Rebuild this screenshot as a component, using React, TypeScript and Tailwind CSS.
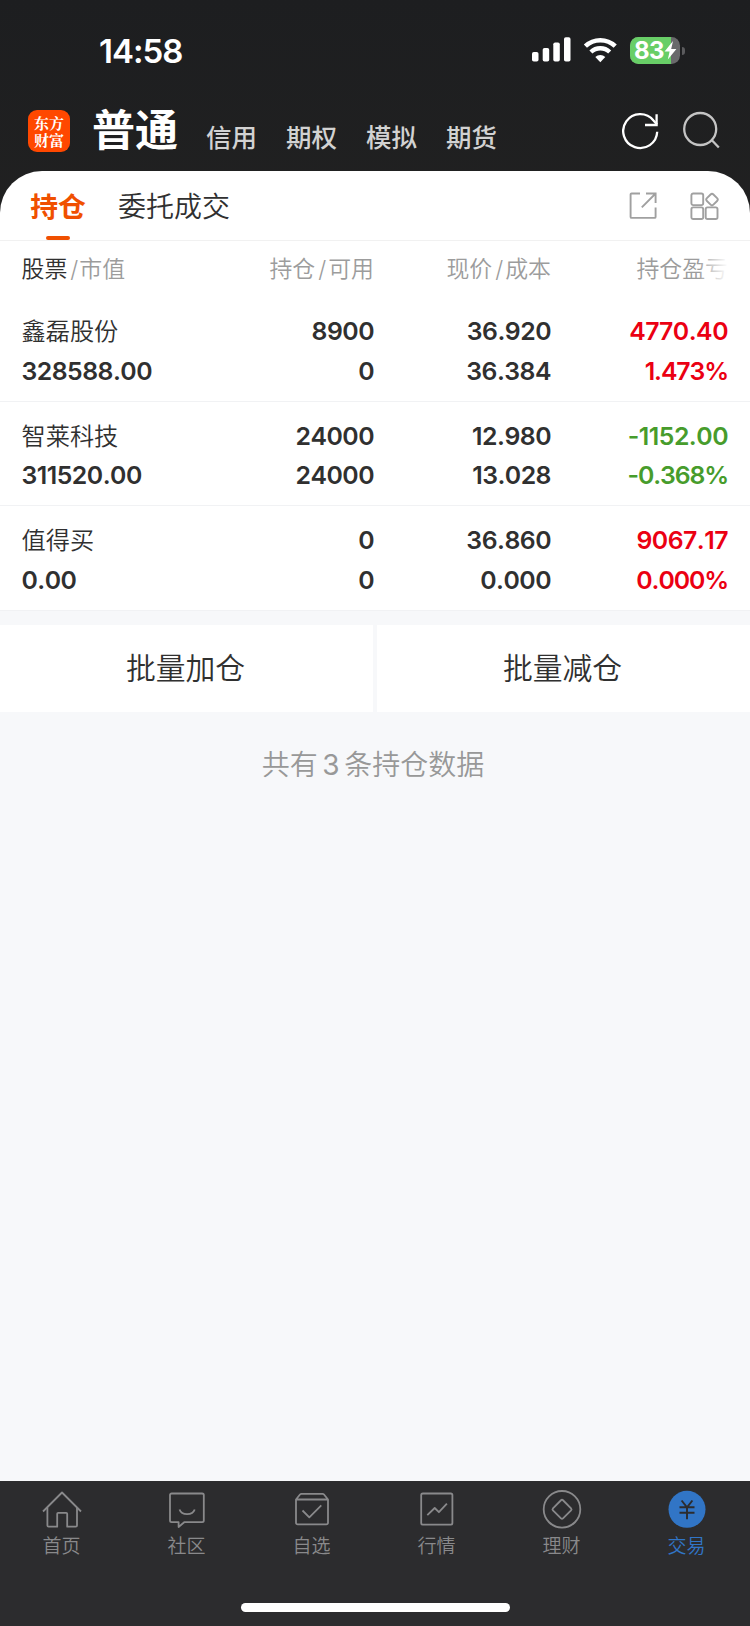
import React from "react";

const holdings = [
    { name: "鑫磊股份", value: "328588.00", amount: "8900", usable: "0", price: "36.920", cost: "36.384", profit: "4770.40", rate: "1.473%", color: "text-[#eb0012]" },
    { name: "智莱科技", value: "311520.00", amount: "24000", usable: "24000", price: "12.980", cost: "13.028", profit: "-1152.00", rate: "-0.368%", color: "text-[#479c2c]" },
    { name: "值得买", value: "0.00", amount: "0", usable: "0", price: "36.860", cost: "0.000", profit: "9067.17", rate: "0.000%", color: "text-[#eb0012]" },
];

const StatusBar = () => (
    <div className="flex h-[100px] items-start pl-[99px] pr-[65px] pt-[32px] text-white">
        <div className="text-[33px] leading-[38px] font-semibold tracking-[-1px]">14:58</div>
        <div className="ml-auto flex pt-[5px]">
            <svg width="39" height="26" viewBox="0 0 39 26" fill="currentColor">
                <rect x="0" y="15" width="6.5" height="9.5" rx="1.8" />
                <rect x="10.7" y="11" width="6.5" height="13.5" rx="1.8" />
                <rect x="21.3" y="5.5" width="6.5" height="19" rx="1.8" />
                <rect x="32" y="0.3" width="6.5" height="24.2" rx="1.8" />
            </svg>
            <svg className="ml-[12px]" width="35" height="26" viewBox="0 0 35 26" fill="none" stroke="currentColor">
                <path d="M2.4 9.2a21.6 21.6 0 0 1 29.8 0" strokeWidth="4.6" />
                <path d="M7.9 15a13.7 13.7 0 0 1 18.8 0" strokeWidth="4.4" />
                <path d="M17.3 25.2l-5-5.1a7.2 7.2 0 0 1 10 0z" fill="currentColor" stroke="none" />
            </svg>
            <div className="relative ml-[12px] flex h-[27px] w-[50px] overflow-hidden rounded-[8.5px] bg-[#69696b]">
                <div className="h-full w-[41px] bg-[#68ce67]"></div>
                <div className="absolute left-[4px] top-0 text-[24px] leading-[27px] font-bold tracking-[-0.5px]">83</div>
                <svg className="absolute left-[34px] top-[4px]" width="13" height="19" viewBox="0 0 13 19" fill="currentColor">
                    <path d="M9 0L0.6 10.4h5L3.8 18.6 12.4 8H7.2z" />
                </svg>
            </div>
            <div className="ml-[2px] mt-[10px] h-[8px] w-[3px] rounded-r-[3px] bg-[#5b5b5d]"></div>
        </div>
    </div>
);

const Header = () => (
    <div className="flex h-[71px] pl-[28px] pr-[29px]">
        <div className="mt-[10px] flex h-[42px] w-[42px] flex-col items-center justify-center rounded-[9px] bg-[#ff4800] text-center font-['Noto_Serif_CJK_SC','Noto_Sans_CJK_SC',serif] text-[15px] leading-[17px] font-bold text-white">
            东方<br />财富
        </div>
        <div className="ml-[22px] w-[88px] text-[43px] leading-[60px] font-bold text-white">普通</div>
        <div className="ml-[26px] mt-[18px] flex gap-[29px] text-[25.5px] leading-[40px] font-medium text-[#d2d2d2]">
            <span>信用</span>
            <span>期权</span>
            <span>模拟</span>
            <span>期货</span>
        </div>
        <svg className="ml-auto mt-[11px]" width="38" height="40" viewBox="0 0 38 40" fill="none" stroke="#fff" strokeWidth="2.3">
            <path d="M35.2 20.8A17 17 0 1 1 31.5 9.5L35 13.5" />
            <path d="M34.6 3.300v10.700H23" />
        </svg>
        <svg className="ml-[23px] mt-[11px]" width="38" height="40" viewBox="0 0 38 40" fill="none" stroke="#c4c4c4" strokeWidth="2.3">
            <circle cx="17.2" cy="18" r="16" />
            <path d="M28.2 28.5l7.600 8" />
        </svg>
    </div>
);

const Tabs = () => (
    <div className="flex h-[70px] border-b border-[#f1f1f1] pl-[30px] pr-[31px]">
        <div className="flex w-[56px] flex-col items-center whitespace-nowrap">
            <div className="mt-[15px] text-[27.8px] leading-[42px] font-semibold text-[#f05000]">持仓</div>
            <div className="mt-[8px] h-[5px] w-[24px] rounded-[2px] bg-[#f05000]"></div>
        </div>
        <div className="ml-[32px] mt-[15px] text-[28px] leading-[42px] font-[350] text-[#303030]">委托成交</div>
        <svg className="ml-auto mt-[21px]" width="28" height="28" viewBox="0 0 28 28" fill="none" stroke="#a0a0a0" strokeWidth="1.9">
            <path d="M11 1.5H2.600a1 1 0 0 0-1 1v22.400a1 1 0 0 0 1 1h23a1 1 0 0 0 1-1V15.600" />
            <path d="M17 1.5h9.600v9.400M26.600 1.500L12.800 15.400" />
        </svg>
        <svg className="ml-[33px] mt-[21px]" width="29" height="29" viewBox="0 0 29 29" fill="none" stroke="#a0a0a0" strokeWidth="1.9">
            <rect x="1.4" y="1.5" width="11.8" height="11.6" rx="1.8" />
            <rect x="1.4" y="15.4" width="11.8" height="11.6" rx="1.8" />
            <rect x="15.7" y="15.4" width="11.8" height="11.6" rx="1.8" />
            <rect x="17.4" y="3" width="9.2" height="9.2" rx="2" transform="rotate(45 22 7.6)" />
        </svg>
    </div>
);

const TableHead = () => (
    <div className="grid h-[56px] grid-cols-[172.5px_180px_177px_177px] pl-[21.5px] pt-[10px] text-[22.9px] leading-[36px] font-[350] text-[#9c9c9c]">
        <div>
            <span className="text-[#303030]">股票</span>
            <span className="pl-[3px] pr-[1px]">/</span>市值
        </div>
        <div className="text-right">持仓<span className="pl-[3px] pr-[2px]">/</span>可用</div>
        <div className="text-right">现价<span className="pl-[3px] pr-[2px]">/</span>成本</div>
        <div className="relative text-right">
            持仓盈亏
            <div className="absolute right-0 top-0 h-full w-[28px] bg-linear-to-r from-white/10 to-white"></div>
        </div>
    </div>
);

const TabItem = ({ label, active, children }: { label: string; active?: boolean; children: React.ReactNode }) => (
    <div className={`flex w-[125px] flex-col items-center pr-px pt-[9px] ${active ? "text-[#3175c6]" : "text-[#89898b]"}`}>
        <svg width="40" height="40" viewBox="0 0 40 40" fill="none" stroke="currentColor" strokeWidth="1.8" strokeLinejoin="round">
            {children}
        </svg>
        <div className="mr-px mt-px text-[19px] leading-[32px] font-[350]">{label}</div>
    </div>
);

const App = () => {
    return (
        <div className="flex h-[1626px] w-[750px] flex-col bg-[#f7f8fa] font-['Inter','Noto_Sans_CJK_SC',sans-serif]">
            <div className="bg-linear-to-b from-[#1d1e20] to-[#212121]">
                <StatusBar />
                <Header />
                <div className="rounded-t-[42px] bg-white">
                    <Tabs />
                </div>
            </div>
            <div className="bg-white">
                <TableHead />
                {holdings.map((item) => (
                    <div key={item.name} className="grid h-[104.6px] grid-cols-[172.5px_180px_177px_177px] border-b border-[#f1f2f4] pl-[21.5px] pt-[15px] text-[24.8px] leading-[39.5px] font-semibold tracking-[-0.5px] text-[#303030] [font-kerning:none]">
                        <div>
                            <div className="text-[24.2px] font-[350] tracking-normal">{item.name}</div>
                            <div>{item.value}</div>
                        </div>
                        <div className="text-right">
                            <div>{item.amount}</div>
                            <div>{item.usable}</div>
                        </div>
                        <div className="text-right">
                            <div>{item.price}</div>
                            <div>{item.cost}</div>
                        </div>
                        <div className={`text-right ${item.color}`}>
                            <div>{item.profit}</div>
                            <div className="tracking-[-1.1px]">{item.rate}</div>
                        </div>
                    </div>
                ))}
            </div>
            <div className="mt-[14px] flex h-[87px] gap-[4px] text-[29.8px] leading-[87px] font-[350] text-[#303030]">
                <div className="flex-1 bg-white pr-[2px] text-center">批量加仓</div>
                <div className="flex-1 bg-white pr-[2px] text-center">批量减仓</div>
            </div>
            <div className="mt-[32px] pr-[4px] text-center text-[28px] leading-[42px] font-[350] text-[#989898]">
                共有<span className="px-[4.5px] font-normal">3</span>条持仓数据
            </div>
            <div className="mt-auto h-[145px] bg-[#2c2c2e]">
                <div className="flex h-[122px]">
                    <TabItem label="首页">
                        <path d="M1 21.5L20 2.500l19 19" />
                        <path d="M5.400 17.500V35.500a1.200 1.200 0 0 0 1.200 1.200h8.600V23.800a1 1 0 0 1 1-1h8a1 1 0 0 1 1 1v12.900h8.600a1.200 1.200 0 0 0 1.200-1.200V17.500" />
                    </TabItem>
                    <TabItem label="社区">
                        <path d="M4.600 3.500h30.600a1.600 1.600 0 0 1 1.600 1.600v25.500a1.600 1.600 0 0 1-1.600 1.600H17.200l-5.600 4.800V32.200h-7a1.600 1.600 0 0 1-1.600-1.600V5.100a1.600 1.600 0 0 1 1.600-1.600z" />
                        <path d="M12.500 19.500c2.200 6.200 13 6.200 15.200 0" />
                    </TabItem>
                    <TabItem label="自选">
                        <path d="M4 9.500l4-5a2 2 0 0 1 1.500-.7h21a2 2 0 0 1 1.500.7l4 5v23.300a1.600 1.600 0 0 1-1.600 1.600H5.600A1.600 1.600 0 0 1 4 32.800zM4 9.500h32" />
                        <path d="M10.500 20.500l6.800 6.800 12-12" />
                    </TabItem>
                    <TabItem label="行情">
                        <rect x="4.200" y="3.500" width="31.200" height="31.200" rx="1.600" />
                        <path d="M10.300 25.200l7.400-7.200 4.200 4.200 8-8.600" />
                    </TabItem>
                    <TabItem label="理财">
                        <circle cx="20" cy="19.300" r="18.300" />
                        <rect x="12.900" y="12.200" width="14.200" height="14.200" rx="1.400" transform="rotate(45 20 19.300)" />
                    </TabItem>
                    <TabItem label="交易" active>
                        <circle cx="20" cy="19.300" r="18.500" fill="currentColor" stroke="none" />
                        <path d="M14.600 10.500L20 17.300l5.400-6.800M12.500 17.300h15M12.500 22.800h15M20 17.300v12" stroke="#2c2c2e" strokeWidth="1.900" />
                    </TabItem>
                </div>
                <div className="mx-auto h-[9px] w-[269px] rounded-full bg-white"></div>
            </div>
        </div>
    );
};

export default App;
